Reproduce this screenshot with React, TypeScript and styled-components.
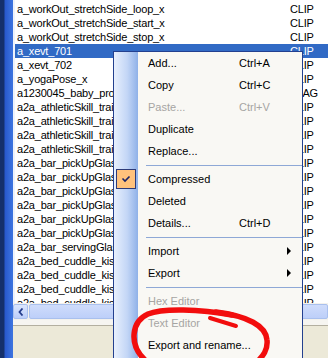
import styled, { createGlobalStyle } from "styled-components";

const GlobalStyle = createGlobalStyle`
  html, body {
    margin: 0;
    padding: 0;
    width: 328px;
    height: 358px;
    overflow: hidden;
    background: #ece9d8;
  }
  body {
    font-family: "Liberation Sans", Arial, sans-serif;
    font-size: 11px;
  }
`;

const Screen = styled.div`
  position: relative;
  display: flex;
  width: 328px;
  height: 358px;
  overflow: hidden;
`;

const WindowFrame = styled.div`
  width: 13px;
  flex-shrink: 0;
  background: linear-gradient(
    to right,
    #15306b 0,
    #15306b 4px,
    #2858cc 5px,
    #3b72de 12px
  );
`;

const Main = styled.div`
  flex: 1;
  min-width: 0;
  display: flex;
  flex-direction: column;
`;

const ListView = styled.div`
  height: 303px;
  flex-shrink: 0;
  box-sizing: border-box;
  padding-top: 2px;
  background: #fff;
  border-left: 2px solid #eef2fa;
  overflow: hidden;
`;

const Row = styled.div<{ $selected?: boolean }>`
  display: flex;
  align-items: center;
  height: 14px;
  white-space: nowrap;
  letter-spacing: -0.2px;
  background: ${(p) => (p.$selected ? "#316ac5" : "transparent")};
  color: ${(p) => (p.$selected ? "#fff" : "#000")};
`;

const NameCell = styled.div`
  width: 275px;
  flex-shrink: 0;
  box-sizing: border-box;
  padding-left: 2px;
  overflow: hidden;
`;

const TypeCell = styled.div`
  flex: 1;
`;

const HScrollbar = styled.div`
  display: flex;
  height: 15px;
  flex-shrink: 0;
  padding: 1px 0;
  background: #f3f1ec;
  gap: 1px;
`;

const ScrollButton = styled.div`
  width: 15px;
  display: flex;
  align-items: center;
  justify-content: center;
  box-sizing: border-box;
  border: 1px solid #a9c0ee;
  border-radius: 2px;
  background: linear-gradient(#dbe6fd, #bccefa);
`;

const ScrollThumb = styled.div`
  flex: 1;
  box-sizing: border-box;
  border: 1px solid #a9c0ee;
  border-radius: 2px;
  background: linear-gradient(#cfdcfb, #bdcff9);
`;

const StatusArea = styled.div`
  flex: 1;
  border-top: 5px solid #f6f5f1;
  box-shadow: inset 0 1px 0 #b3afa0;
  background: #ece9d8;
`;

const Menu = styled.div`
  position: absolute;
  left: 113px;
  top: 51px;
  width: 190px;
  height: 320px;
  box-sizing: border-box;
  border: 1px solid #23408f;
  background: linear-gradient(to right, #e8f0fd, #c3d6f6 55%, #8fb1e8) 0 0 /
      24px 100% no-repeat,
    #f9f8f4;
`;

const Item = styled.div<{ $disabled?: boolean }>`
  display: flex;
  align-items: center;
  height: 22px;
  color: ${(p) => (p.$disabled ? "#a6a5a3" : "#000")};
  white-space: nowrap;
`;

const IconSlot = styled.div`
  width: 24px;
  height: 22px;
  flex-shrink: 0;
  display: flex;
  align-items: center;
  padding-left: 2px;
  box-sizing: border-box;
`;

const CheckBox = styled.div`
  width: 20px;
  height: 20px;
  box-sizing: border-box;
  border: 1px solid #2c3a78;
  background: #ffc27c;
  display: flex;
  align-items: center;
  justify-content: center;
`;

const Label = styled.div`
  width: 91px;
  margin-left: 10px;
  flex-shrink: 0;
`;

const Shortcut = styled.div`
  flex: 1;
`;

const SubArrow = styled.div`
  width: 0;
  height: 0;
  margin-right: 11px;
  border-top: 4px solid transparent;
  border-bottom: 4px solid transparent;
  border-left: 4px solid #000;
`;

const Separator = styled.div`
  height: 6px;
  display: flex;
  align-items: center;
  padding-left: 32px;
  &::after {
    content: "";
    flex: 1;
    height: 1px;
    background: #8ea8d6;
  }
`;

const Scribble = styled.svg`
  position: absolute;
  left: 0;
  top: 0;
  pointer-events: none;
`;

const rows: [string, string][] = [
  ["a_workOut_stretchSide_loop_x", "CLIP"],
  ["a_workOut_stretchSide_start_x", "CLIP"],
  ["a_workOut_stretchSide_stop_x", "CLIP"],
  ["a_xevt_701", "CLIP"],
  ["a_xevt_702", "CLIP"],
  ["a_yogaPose_x", "CLIP"],
  ["a1230045_baby_propFlag", "FLAG"],
  ["a2a_athleticSkill_train_a_x", "CLIP"],
  ["a2a_athleticSkill_train_b_x", "CLIP"],
  ["a2a_athleticSkill_train_c_x", "CLIP"],
  ["a2a_athleticSkill_train_d_x", "CLIP"],
  ["a2a_bar_pickUpGlass_a_x", "CLIP"],
  ["a2a_bar_pickUpGlass_b_x", "CLIP"],
  ["a2a_bar_pickUpGlass_c_x", "CLIP"],
  ["a2a_bar_pickUpGlass_d_x", "CLIP"],
  ["a2a_bar_pickUpGlass_e_x", "CLIP"],
  ["a2a_bar_pickUpGlass_f_x", "CLIP"],
  ["a2a_bar_servingGlass_x", "CLIP"],
  ["a2a_bed_cuddle_kiss_a_x", "CLIP"],
  ["a2a_bed_cuddle_kiss_b_x", "CLIP"],
  ["a2a_bed_cuddle_kiss_c_x", "CLIP"],
  ["a2a_bed_cuddle_kiss_d_x", "CLIP"],
];

type MenuEntry =
  | { sep: true }
  | {
      label: string;
      shortcut?: string;
      disabled?: boolean;
      checked?: boolean;
      sub?: boolean;
    };

const menu: MenuEntry[] = [
  { label: "Add...", shortcut: "Ctrl+A" },
  { label: "Copy", shortcut: "Ctrl+C" },
  { label: "Paste...", shortcut: "Ctrl+V", disabled: true },
  { label: "Duplicate" },
  { label: "Replace..." },
  { sep: true },
  { label: "Compressed", checked: true },
  { label: "Deleted" },
  { label: "Details...", shortcut: "Ctrl+D" },
  { sep: true },
  { label: "Import", sub: true },
  { label: "Export", sub: true },
  { sep: true },
  { label: "Hex Editor", disabled: true },
  { label: "Text Editor", disabled: true },
  { label: "Export and rename..." },
];

const CheckIcon = () => (
  <svg width="10" height="8" viewBox="0 0 10 8">
    <polyline
      points="1.5,3.5 4,6 8.5,1.5"
      fill="none"
      stroke="#1a2466"
      strokeWidth="1.6"
    />
  </svg>
);

export default function App() {
  return (
    <>
      <GlobalStyle />
      <Screen>
        <WindowFrame />
        <Main>
          <ListView>
            {rows.map(([name, type], i) => (
              <Row key={i} $selected={i === 3}>
                <NameCell>{name}</NameCell>
                <TypeCell>{type}</TypeCell>
              </Row>
            ))}
          </ListView>
          <HScrollbar>
            <ScrollButton>
              <svg width="6" height="8" viewBox="0 0 6 8">
                <polyline
                  points="4.5,0.5 1.5,4 4.5,7.5"
                  fill="none"
                  stroke="#243c8c"
                  strokeWidth="1.8"
                />
              </svg>
            </ScrollButton>
            <ScrollThumb />
          </HScrollbar>
          <StatusArea />
        </Main>

        <Menu>
          {menu.map((m, i) =>
            "sep" in m ? (
              <Separator key={i} />
            ) : (
              <Item key={i} $disabled={m.disabled}>
                <IconSlot>
                  {m.checked && (
                    <CheckBox>
                      <CheckIcon />
                    </CheckBox>
                  )}
                </IconSlot>
                <Label>{m.label}</Label>
                <Shortcut>{m.shortcut}</Shortcut>
                {m.sub && <SubArrow />}
              </Item>
            )
          )}
        </Menu>

        <Scribble width="328" height="358" viewBox="0 0 328 358">
          <path
            d="M232 315 C200 309 162 308 148 314 C132 321 128 344 145 360"
            fill="none"
            stroke="#f20d0d"
            strokeWidth="5.5"
            strokeLinecap="round"
          />
          <path
            d="M216 312 C248 316 266 326 267 340 C268 350 263 356 257 362"
            fill="none"
            stroke="#f20d0d"
            strokeWidth="5.5"
            strokeLinecap="round"
          />
          <path
            d="M210 318 L236 326"
            fill="none"
            stroke="#f20d0d"
            strokeWidth="4"
            strokeLinecap="round"
          />
        </Scribble>
      </Screen>
    </>
  );
}
